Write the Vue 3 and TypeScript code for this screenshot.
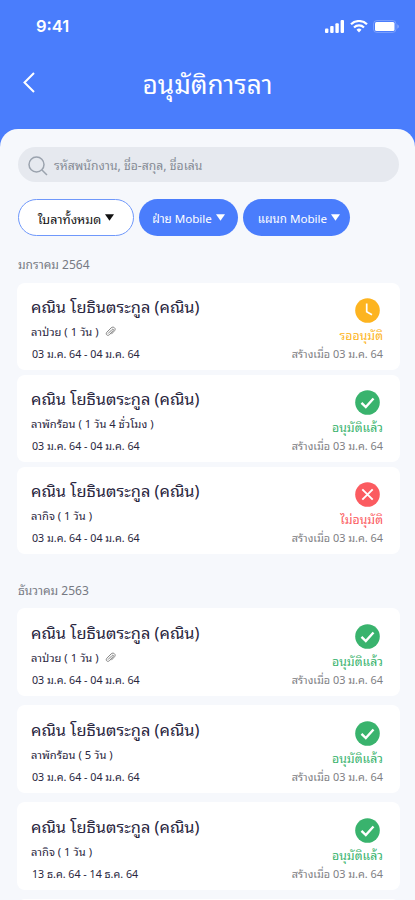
<script setup lang="ts">
type Status = 'pending' | 'approved' | 'rejected'

interface Leave {
  id: number
  kind: string
  attachment?: boolean
  range: string
  status: Status
}

interface Month {
  title: string
  key: string
  items: Leave[]
}

const employee = 'คณิน โยธินตระกูล (คณิน)'
const created = 'สร้างเมื่อ 03 ม.ค. 64'

const labels: Record<Status, string> = {
  pending: 'รออนุมัติ',
  approved: 'อนุมัติแล้ว',
  rejected: 'ไม่อนุมัติ',
}

const filters = [
  { key: 'all', text: 'ใบลาทั้งหมด' },
  { key: 'side', text: 'ฝ่าย Mobile' },
  { key: 'dept', text: 'แผนก Mobile' },
]

const months: Month[] = [
  {
    title: 'มกราคม 2564',
    key: 'january',
    items: [
      { id: 1, kind: 'ลาป่วย ( 1 วัน )', attachment: true, range: '03 ม.ค. 64 - 04 ม.ค. 64', status: 'pending' },
      { id: 2, kind: 'ลาพักร้อน ( 1 วัน 4 ชั่วโมง )', range: '03 ม.ค. 64 - 04 ม.ค. 64', status: 'approved' },
      { id: 3, kind: 'ลากิจ ( 1 วัน )', range: '03 ม.ค. 64 - 04 ม.ค. 64', status: 'rejected' },
    ],
  },
  {
    title: 'ธันวาคม 2563',
    key: 'december',
    items: [
      { id: 4, kind: 'ลาป่วย ( 1 วัน )', attachment: true, range: '03 ม.ค. 64 - 04 ม.ค. 64', status: 'approved' },
      { id: 5, kind: 'ลาพักร้อน ( 5 วัน )', range: '03 ม.ค. 64 - 04 ม.ค. 64', status: 'approved' },
      { id: 6, kind: 'ลากิจ ( 1 วัน )', range: '13 ธ.ค. 64 - 14 ธ.ค. 64', status: 'approved' },
    ],
  },
]
</script>

<template>
  <main class="phone">
    <div class="statusbar">
      <span class="clock">9:41</span>
      <div class="signals">
        <svg class="bars" width="20" height="13" viewBox="0 0 20 13" fill="#fff">
          <rect x="0" y="8.5" width="3.4" height="4.5" rx="1" />
          <rect x="5.2" y="6" width="3.4" height="7" rx="1" />
          <rect x="10.4" y="3.2" width="3.4" height="9.8" rx="1" />
          <rect x="15.6" y="0" width="3.4" height="13" rx="1" />
        </svg>
        <svg class="wifi" width="18" height="13" viewBox="0 0 18 13" fill="none" stroke="#fff" stroke-width="2.2">
          <path d="M1 4.3a11.4 11.4 0 0 1 16 0" />
          <path d="M4 7.5a7.1 7.1 0 0 1 10 0" />
          <path d="M6.5 9.7a3.6 3.6 0 0 1 5 0L9 12.4z" fill="#fff" stroke="none" />
        </svg>
        <svg class="battery" width="26" height="13" viewBox="0 0 26 13">
          <rect x=".5" y=".5" width="22.5" height="12" rx="3.5" fill="none" stroke="#fff" stroke-opacity=".25" />
          <rect x="2" y="2" width="19.5" height="9" rx="1.5" fill="#fff" />
          <path d="M24.3 4.2v4.6c1-.5 1.5-1.3 1.5-2.3s-.5-1.8-1.5-2.3z" fill="#fff" fill-opacity=".35" />
        </svg>
      </div>
    </div>

    <header class="topbar">
      <button class="back" aria-label="ย้อนกลับ">
        <svg width="12" height="21" viewBox="0 0 12 21" fill="none" stroke="#fff" stroke-width="2">
          <path d="M11 1 1.5 10.5 11 20" />
        </svg>
      </button>
      <h1 class="title"><span>อนุมัติการลา</span></h1>
    </header>

    <section class="sheet">
      <div class="search">
        <svg width="20" height="20" viewBox="0 0 20 20" fill="none" stroke="#9ba3ae" stroke-width="1.5">
          <circle cx="8.5" cy="8.5" r="7.5" />
          <path d="m14 14 5 5" />
        </svg>
        <span class="hint">รหัสพนักงาน, ชื่อ-สกุล, ชื่อเล่น</span>
      </div>

      <nav class="filters">
        <button v-for="f in filters" :key="f.key" class="chip" :class="f.key">
          <span>{{ f.text }}</span>
          <svg width="9" height="7" viewBox="0 0 9 7" fill="currentColor"><path d="M0 .3h9L4.5 6.8z" /></svg>
        </button>
      </nav>

      <section v-for="m in months" :key="m.key" class="month" :class="m.key">
        <h2 class="month-title"><span>{{ m.title }}</span></h2>
        <div class="list">
          <article v-for="l in m.items" :key="l.id" class="card">
            <div class="info">
              <h3 class="name"><span>{{ employee }}</span></h3>
              <p class="kind">
                <span>{{ l.kind }}</span>
                <svg v-if="l.attachment" width="11" height="11" viewBox="0 0 11 11" fill="none" stroke="#777" stroke-width=".9">
                  <path d="M3 7.6 7.1 3.5c.9-.9 1.9.1 1.1 1L4.3 8.8C2.6 10.4.1 8.3 1.8 6.3l4.3-4.4C8.4-.2 11.5 2.5 9.5 4.8L6.3 8.2" />
                </svg>
              </p>
              <p class="range"><span>{{ l.range }}</span></p>
            </div>
            <div class="state" :class="l.status">
              <svg class="badge" width="25" height="25" viewBox="0 0 25 25" fill="none" stroke="#fff">
                <circle cx="12.5" cy="12.5" r="12.3" fill="currentColor" stroke="none" />
                <path v-if="l.status === 'pending'" d="M11.7 5.5v8.3l5.3 3" stroke-width="1.7" />
                <path v-else-if="l.status === 'approved'" d="m6.5 12.8 4.3 4.2 7.7-8.5" stroke-width="2.4" />
                <path v-else d="m7.3 7.3 10.4 10.4M17.7 7.3 7.3 17.7" stroke-width="1.9" />
              </svg>
              <p class="label"><span>{{ labels[l.status] }}</span></p>
              <p class="created"><span>{{ created }}</span></p>
            </div>
          </article>
          <div v-if="m.key === 'december'" class="card next"></div>
        </div>
      </section>
    </section>
  </main>
</template>

<style>
body {
  margin: 0;
  overflow: hidden;
}
</style>

<style scoped>
* {
  box-sizing: border-box;
}

.phone {
  width: 415px;
  height: 900px;
  overflow: hidden;
  background: #4a7dfc;
  font-family: "Noto Sans Thai Looped", "Sarabun", "Loma", "Garuda", "Waree", "Noto Sans", sans-serif;
}

h1, h2, h3, p {
  margin: 0;
  font-weight: 400;
  white-space: nowrap;
}

button {
  border: 0;
  padding: 0;
  background: none;
  font: inherit;
}

svg {
  display: block;
  flex: none;
}

.statusbar {
  height: 52px;
  padding: 0 16px 0 36px;
  display: flex;
  justify-content: space-between;
  align-items: center;
}

.clock {
  color: #fff;
  font: 600 16.5px/20px Inter, sans-serif;
}

.signals {
  display: flex;
  align-items: center;
  gap: 5px;
}

.topbar {
  height: 77px;
  padding: 0 23px;
  display: grid;
  grid-template-columns: 12px 1fr 12px;
}

.back {
  padding-top: 20px;
  align-self: start;
}

.title {
  padding-top: 10px;
  text-align: center;
  color: #fff;
  font-size: 26.2px;
  line-height: 40px;
}

.sheet {
  height: 771px;
  padding: 18px 15px 0 17px;
  border-radius: 18px 18px 0 0;
  background: #f6f8fc;
  overflow: hidden;
}

.search {
  height: 35px;
  margin: 0 1px;
  padding: 2px 10px 0;
  display: flex;
  align-items: center;
  gap: 6px;
  border-radius: 18px;
  background: #e6e9ef;
  color: #858b95;
  font-size: 12.2px;
}

.hint {
  padding-bottom: 3px;
}

.filters {
  display: flex;
  gap: 5px;
  margin: 17px 0 0 1px;
}

.chip {
  height: 37px;
  border-radius: 19px;
  display: flex;
  justify-content: center;
  align-items: center;
  gap: 4px;
  background: #4a7dfc;
  color: #fff;
  font-size: 11.6px;
  white-space: nowrap;
}

.all {
  width: 116px;
  border: 1.5px solid #6f98fb;
  background: #fff;
  color: #111;
  font-size: 12.5px;
}

.side {
  width: 99px;
}

.dept {
  width: 107px;
  padding-left: 5px;
}

.january {
  padding-top: 18px;
}

.december {
  padding-top: 26px;
}

.month-title {
  height: 29px;
  padding-left: 1px;
  color: #777a83;
  font-size: 12px;
  line-height: 20px;
}

.december .month-title {
  height: 28px;
}

.list {
  display: flex;
  flex-direction: column;
  gap: 5px;
}

.december .list {
  gap: 9px;
}

.card {
  height: 87px;
  padding: 0 17px 0 14px;
  border-radius: 8px;
  display: flex;
  justify-content: space-between;
  background: #fff;
}

.december .card {
  height: 88px;
}

.info {
  padding-top: 10px;
  color: #29263e;
}

.december .info {
  padding-top: 11px;
}

.name {
  font-size: 16.4px;
  line-height: 26px;
}

.kind {
  display: flex;
  align-items: center;
  gap: 6px;
  font-size: 11.2px;
  line-height: 24px;
}

.range {
  padding-left: 1px;
  font-size: 10.7px;
  line-height: 21px;
}

.state {
  padding-top: 15px;
  display: flex;
  flex-direction: column;
  align-items: flex-end;
}

.december .state {
  padding-top: 16px;
}

.badge {
  margin-right: 3px;
}

.label {
  font-size: 12.3px;
  line-height: 24px;
}

.created {
  margin-top: -3px;
  color: #7e7e83;
  font-size: 10.85px;
  line-height: 18px;
}

.pending {
  color: #fdb420;
}

.approved {
  color: #39b36d;
}

.rejected {
  color: #fb5b60;
}
</style>
